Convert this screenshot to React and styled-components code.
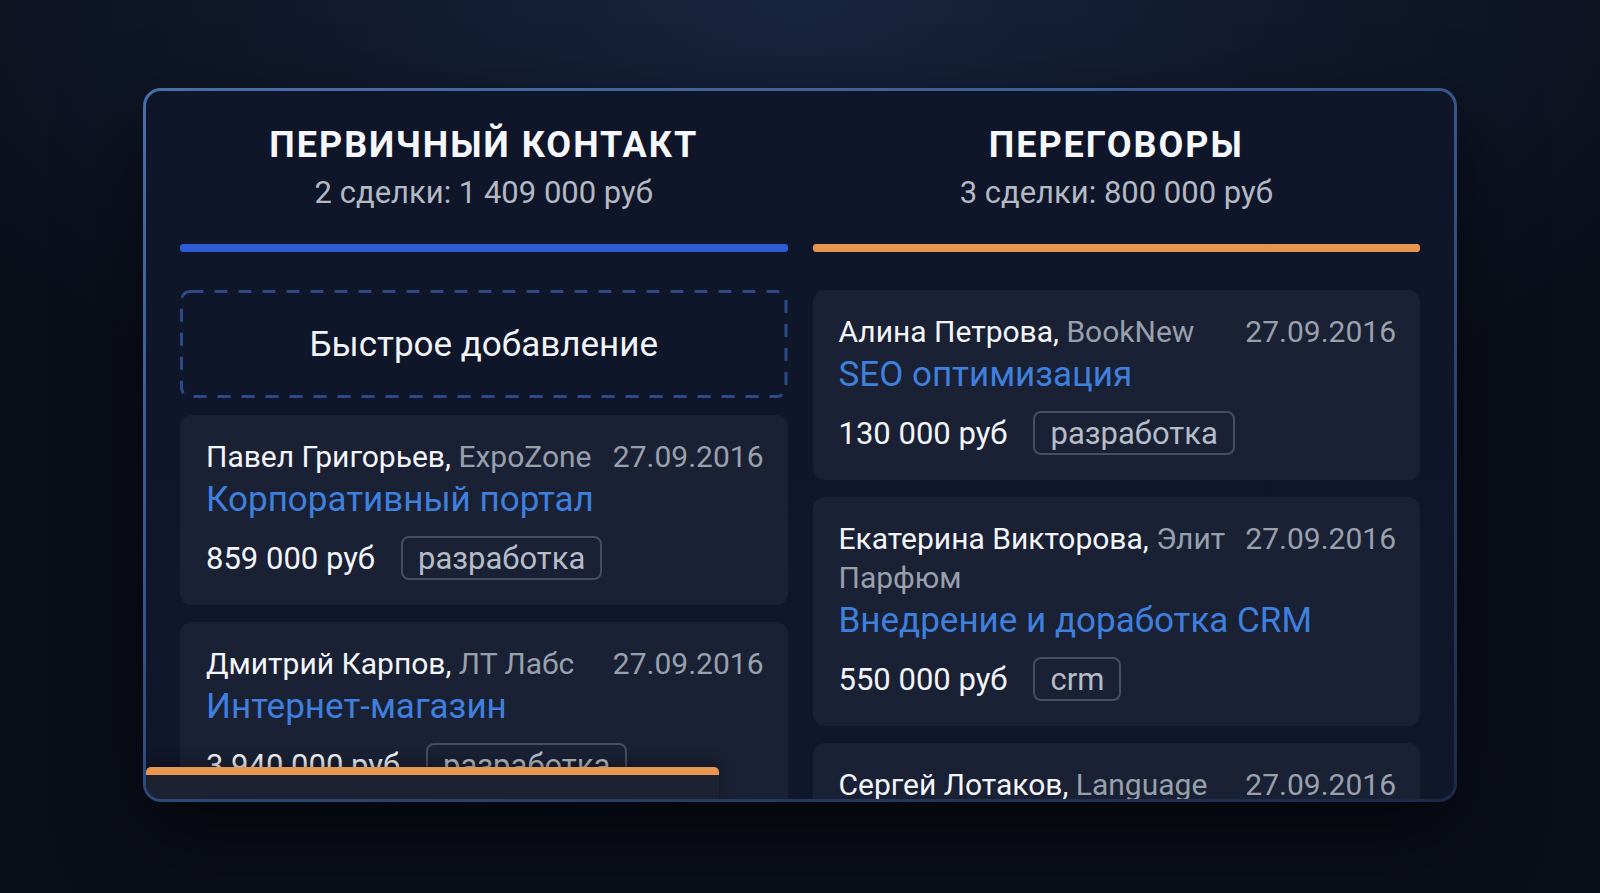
import React from "react";
import styled, { createGlobalStyle } from "styled-components";

const GlobalStyle = createGlobalStyle`
  html, body {
    margin: 0;
    padding: 0;
  }
  body {
    background: #0a0e19;
    font-family: Roboto, "Noto Sans", sans-serif;
  }
`;

const Page = styled.div`
  width: 1600px;
  height: 893px;
  box-sizing: border-box;
  padding-top: 88px;
  display: flex;
  justify-content: center;
  overflow: hidden;
  background: radial-gradient(ellipse 1000px 460px at 50% 0%, #18253f 0%, #111a2e 45%, #0a0e19 100%);
`;

const Panel = styled.div`
  position: relative;
  width: 1314px;
  height: 714px;
  box-sizing: border-box;
  border: 3px solid transparent;
  border-radius: 18px;
  overflow: hidden;
  background: linear-gradient(180deg, #0f1629 0%, #10172a 100%) padding-box,
    linear-gradient(160deg, #4a6ea6 0%, #34548a 45%, #1c2a46 100%) border-box;
  box-shadow: 0 30px 80px rgba(0, 0, 0, 0.55);
`;

const Board = styled.div`
  display: grid;
  grid-template-columns: 1fr 1fr;
  column-gap: 25px;
  padding: 0 34px;
`;

const Column = styled.div`
  display: flex;
  flex-direction: column;
`;

const Header = styled.div`
  text-align: center;
  padding-top: 32px;
`;

const StageTitle = styled.div`
  font-size: 36px;
  line-height: 44px;
  font-weight: 700;
  letter-spacing: 2px;
  color: #f5f7fb;
  text-transform: uppercase;
`;

const Summary = styled.div`
  margin-top: 6px;
  font-size: 31px;
  line-height: 40px;
  color: #b4b9c4;
`;

const StageBar = styled.div`
  margin-top: 31px;
  height: 8px;
  border-radius: 3px;
  background: ${(props) => props.color};
`;

const CardList = styled.div`
  margin-top: 38px;
  display: flex;
  flex-direction: column;
  gap: 17px;
`;

const QuickAdd = styled.div`
  position: relative;
  height: 108px;
  display: flex;
  align-items: center;
  justify-content: center;
  font-size: 35px;
  color: #f2f4f8;
`;

const DashedFrame = styled.svg`
  position: absolute;
  inset: 0;
  width: 100%;
  height: 100%;
  pointer-events: none;
`;

const Card = styled.div`
  background: #1a2134;
  border-radius: 12px;
  padding: 22px 24px 25px 26px;
`;

const CardHead = styled.div`
  display: flex;
  justify-content: space-between;
  align-items: flex-start;
  gap: 20px;
`;

const Person = styled.div`
  font-size: 30px;
  line-height: 39px;
  color: #f3f5f9;
`;

const Company = styled.span`
  color: #98a0ad;
`;

const DealDate = styled.div`
  font-size: 30px;
  line-height: 39px;
  color: #9aa0ac;
  white-space: nowrap;
`;

const DealTitle = styled.div`
  font-size: 35px;
  line-height: 48px;
  color: #3f80df;
`;

const CardFoot = styled.div`
  margin-top: 12px;
  display: flex;
  align-items: center;
  gap: 26px;
`;

const Amount = styled.div`
  font-size: 31px;
  color: #f3f5f9;
`;

const Tag = styled.div`
  height: 44px;
  box-sizing: border-box;
  display: flex;
  align-items: center;
  padding: 0 15px;
  border: 2px solid #464e60;
  border-radius: 8px;
  font-size: 31px;
  color: #b6bcc8;
`;

const DraggedCard = styled.div`
  position: absolute;
  left: 0;
  top: 676px;
  width: 573px;
  height: 70px;
  box-sizing: border-box;
  background: #1c2232;
  border-top: 8px solid #e8954f;
  border-radius: 5px 5px 0 0;
  box-shadow: 0 -4px 14px rgba(0, 0, 0, 0.35);
`;

const stages = [
  {
    title: "Первичный контакт",
    summary: "2 сделки: 1 409 000 руб",
    color: "#2e5bd6",
    quickAdd: true,
    deals: [
      { person: "Павел Григорьев,", company: "ExpoZone", title: "Корпоративный портал", amount: "859 000 руб", tag: "разработка" },
      { person: "Дмитрий Карпов,", company: "ЛТ Лабс", title: "Интернет-магазин", amount: "3 940 000 руб", tag: "разработка" },
    ],
  },
  {
    title: "Переговоры",
    summary: "3 сделки: 800 000 руб",
    color: "#e8954f",
    deals: [
      { person: "Алина Петрова,", company: "BookNew", title: "SEO оптимизация", amount: "130 000 руб", tag: "разработка" },
      { person: "Екатерина Викторова,", company: "Элит Парфюм", title: "Внедрение и доработка CRM", amount: "550 000 руб", tag: "crm" },
      { person: "Сергей Лотаков,", company: "Language", title: "Мобильное приложение", amount: "320 000 руб", tag: "разработка" },
    ],
  },
];

function DealCard({ deal }) {
  return (
    <Card>
      <CardHead>
        <Person>
          {deal.person} <Company>{deal.company}</Company>
        </Person>
        <DealDate>27.09.2016</DealDate>
      </CardHead>
      <DealTitle>{deal.title}</DealTitle>
      <CardFoot>
        <Amount>{deal.amount}</Amount>
        <Tag>{deal.tag}</Tag>
      </CardFoot>
    </Card>
  );
}

export default function App() {
  return (
    <>
      <GlobalStyle />
      <Page>
        <Panel>
          <Board>
            {stages.map((stage) => (
              <Column key={stage.title}>
                <Header>
                  <StageTitle>{stage.title}</StageTitle>
                  <Summary>{stage.summary}</Summary>
                </Header>
                <StageBar color={stage.color} />
                <CardList>
                  {stage.quickAdd && (
                    <QuickAdd>
                      <DashedFrame>
                        <rect
                          x="1.5"
                          y="1.5"
                          width="604.5"
                          height="105"
                          rx="9"
                          fill="none"
                          stroke="#2c4b85"
                          strokeWidth="3"
                          strokeDasharray="13 11"
                        />
                      </DashedFrame>
                      Быстрое добавление
                    </QuickAdd>
                  )}
                  {stage.deals.map((deal) => (
                    <DealCard key={deal.title} deal={deal} />
                  ))}
                </CardList>
              </Column>
            ))}
          </Board>
          <DraggedCard />
        </Panel>
      </Page>
    </>
  );
}
